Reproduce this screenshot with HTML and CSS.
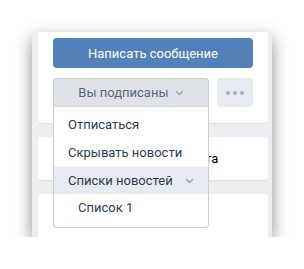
FILE: index.html
```html
<!DOCTYPE html>
<html lang="ru">
<head>
  <meta charset="UTF-8">
  <title>Профиль</title>
  <link rel="stylesheet" href="styles.css">
</head>
<body>
  <div id="panel">
    <div class="card" id="actions">
      <button class="btn-primary">Написать сообщение</button>
      <div class="row">
        <div class="dropdown">
          <button class="btn-sub">Вы подписаны
            <svg width="9" height="6" viewBox="0 0 9 6"><path d="M1 1l3.5 3.5L8 1" fill="none" stroke="#99a2ad" stroke-width="1.3"/></svg>
          </button>
          <ul class="menu">
            <li>Отписаться</li>
            <li>Скрывать новости</li>
            <li class="active">Списки новостей
              <svg width="9" height="6" viewBox="0 0 9 6"><path d="M1 1l3.5 3.5L8 1" fill="none" stroke="#99a2ad" stroke-width="1.3"/></svg>
            </li>
            <li class="sub">Список 1</li>
          </ul>
        </div>
        <button class="btn-more"><span></span><span></span><span></span></button>
      </div>
    </div>
    <div class="card" id="info">
      <span class="line">Связь с редакциями сайта</span>
    </div>
    <div class="card" id="rest"></div>
  </div>
</body>
</html>
```

FILE: styles.css
```css
* {
  font-family: Roboto, "Open Sans", Arial, sans-serif;
  box-sizing: border-box;
}
html, body {
  margin: 0 0;
  background: #fff;
}
#panel {
  margin: 32px 0 0 32px;
  width: 240px;
  height: 205px;
  background-color: #edeef0;
  padding: 0 4px 0 6px;
  box-shadow: 0 6px 16px rgba(0, 0, 0, 0.45);
  display: flex;
  flex-direction: column;
  gap: 14px;
}
.card {
  background: #fff;
  border-radius: 0 0 4px 4px;
  box-shadow: 0 1px 0 #dce1e6;
}
#actions {
  height: 91px;
  padding: 6px 15px;
}
#info {
  height: 43px;
  border-radius: 4px;
  padding: 14px 0 0 17px;
  font-size: 13px;
  color: #000;
}
#rest {
  flex: 1;
  border-radius: 4px 4px 0 0;
}
button {
  border: none;
  border-radius: 4px;
  font-size: 13px;
  outline: none;
  padding: 0;
}
.btn-primary {
  display: block;
  width: 200px;
  height: 30px;
  background-color: #5181b8;
  color: #fff;
}
.row {
  display: flex;
  gap: 8px;
  margin-top: 10px;
}
.dropdown {
  position: relative;
}
.btn-sub {
  width: 156px;
  height: 29px;
  background-color: #dfe3e8;
  border: 1px solid #c5d0db;
  border-bottom-color: #d3d9de;
  border-radius: 4px 4px 0 0;
  color: #55677d;
}
.btn-sub svg {
  margin-left: 3px;
  vertical-align: 1px;
}
.btn-more {
  width: 36px;
  height: 29px;
  background-color: #e5ebf1;
  display: flex;
  justify-content: center;
  align-items: center;
  gap: 3px;
}
.btn-more span {
  width: 4px;
  height: 4px;
  border-radius: 50%;
  background-color: #a3b0c0;
}
.menu {
  position: absolute;
  top: 29px;
  left: 0;
  width: 156px;
  margin: 0;
  padding: 4px 0 5px;
  list-style: none;
  background: #fff;
  border: 1px solid #c5d0db;
  border-top: none;
  border-radius: 0 0 4px 4px;
  z-index: 2;
}
.menu li {
  height: 28px;
  line-height: 28px;
  padding: 0 14px;
  font-size: 13px;
  color: #2a3d55;
  display: flex;
  justify-content: space-between;
  align-items: center;
}
.menu li.active {
  background-color: #e5ebf1;
  height: 27px;
}
.menu li.sub {
  padding-left: 24px;
}
```
